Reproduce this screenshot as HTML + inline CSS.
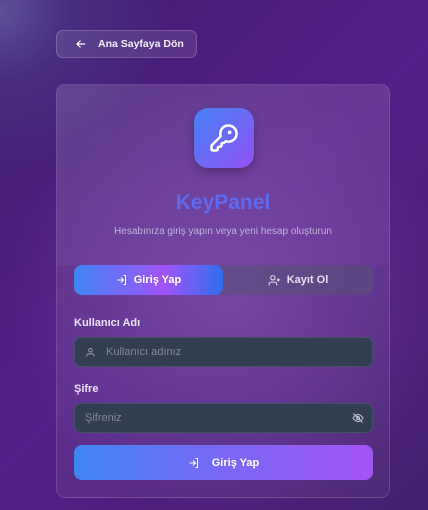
<!DOCTYPE html>
<html><head><meta charset="utf-8"><style>
*{margin:0;padding:0;box-sizing:border-box}
body{width:428px;height:510px;overflow:hidden;font-family:"Liberation Sans",sans-serif;
background:radial-gradient(circle at 0px 10px,#5d4f98 0,#4a2d80 70px,transparent 170px),radial-gradient(circle at 230px 300px,#6a389c 0,transparent 220px),linear-gradient(135deg,#3f1e70 0%,#531f88 50%,#44206e 100%);position:relative}
.back{position:absolute;left:56px;top:30px;width:141px;height:28px;border-radius:7px;background:rgba(255,255,255,0.1);border:1px solid rgba(255,255,255,0.18);color:#f4eefa;font-size:10.5px;font-weight:bold;display:flex;align-items:center;padding-left:19px}
.back span{margin-left:12px}
.card{position:absolute;left:56px;top:84px;width:334px;height:414px;border-radius:9px;border:1px solid rgba(255,255,255,0.13);background:linear-gradient(160deg,rgba(255,255,255,0.1),rgba(255,255,255,0.05));overflow:hidden}
.top{position:absolute;left:0;top:0;width:100%;height:180px;background:linear-gradient(135deg,rgba(120,90,170,0.25),rgba(140,70,180,0.2))}
.icon{position:absolute;left:137px;top:23px;width:60px;height:60px;border-radius:14px;background:linear-gradient(135deg,#4483f5,#8b55f5 90%);box-shadow:0 4px 10px rgba(0,0,0,0.25);display:flex;align-items:center;justify-content:center}
.title{position:absolute;left:0;width:100%;top:106px;text-align:center;font-size:21px;font-weight:bold;color:#5f6af0}
.sub{position:absolute;left:0;width:100%;top:141px;text-align:center;font-size:10px;color:#c2b3da}
.tabs{position:absolute;left:17px;top:180px;width:299px;height:30px;border-radius:8px;background:rgba(90,80,120,0.6)}
.tab{position:absolute;top:0;height:30px;display:flex;align-items:center;justify-content:center;color:#fff;font-size:11px;font-weight:bold;gap:6px}
.t1{left:0;width:149px;border-radius:8px;background:linear-gradient(90deg,#3f86f5,#a153f5 60%,#2f6ff0)}
.t2{left:149px;width:150px;color:#e6e0f0}
.lbl{position:absolute;left:17px;font-size:11px;font-weight:bold;color:#ece4f4}
.inp{position:absolute;left:17px;width:299px;height:30px;border-radius:7px;background:#323f52;border:1px solid #44535f;font-size:11px;color:#7f8a96;display:flex;align-items:center}
.btn{position:absolute;left:17px;top:360px;width:299px;height:35px;border-radius:8px;background:linear-gradient(90deg,#3f86f5,#7a67f5 50%,#a455f5);display:flex;align-items:center;justify-content:center;gap:12px;color:#fff;font-size:11px;font-weight:bold}
</style></head><body>
<div class="back"><svg width="10" height="10" viewBox="0 0 10 10" fill="none" stroke="#fff" stroke-width="1.2"><path d="M9 5H1M4.5 1.5L1 5l3.5 3.5"/></svg><span>Ana Sayfaya Dön</span></div>
<div class="card">
<div class="top"></div>
<div class="icon"><svg width="30" height="30" viewBox="0 0 24 24" fill="none" stroke="#fff" stroke-width="2" stroke-linecap="round" stroke-linejoin="round"><path d="M2.586 17.414A2 2 0 0 0 2 18.828V21a1 1 0 0 0 1 1h3a1 1 0 0 0 1-1v-1a1 1 0 0 1 1-1h1a1 1 0 0 0 1-1v-1a1 1 0 0 1 1-1h.172a2 2 0 0 0 1.414-.586l.814-.814a6.5 6.5 0 1 0-4-4z"/><circle cx="16.5" cy="7.5" r=".5" fill="#fff"/></svg></div>
<div class="title">KeyPanel</div>
<div class="sub">Hesabınıza giriş yapın veya yeni hesap oluşturun</div>
<div class="tabs">
<div class="tab t1"><svg width="12" height="12" viewBox="0 0 24 24" fill="none" stroke="#fff" stroke-width="2"><path d="M15 3h4v18h-4M10 17l5-5-5-5M15 12H3"/></svg>Giriş Yap</div>
<div class="tab t2"><svg width="13" height="13" viewBox="0 0 24 24" fill="none" stroke="#e6e0f0" stroke-width="2"><circle cx="9" cy="7" r="4"/><path d="M2 21v-2a4 4 0 0 1 4-4h6a4 4 0 0 1 4 4v2M19 8v6M16 11h6"/></svg>Kayıt Ol</div>
</div>
<div class="lbl" style="top:232px">Kullanıcı Adı</div>
<div class="inp" style="top:252px;padding-left:10px"><svg width="11" height="11" viewBox="0 0 24 24" fill="none" stroke="#9aa4b0" stroke-width="2"><circle cx="12" cy="7" r="4"/><path d="M4 21v-2a4 4 0 0 1 4-4h8a4 4 0 0 1 4 4v2"/></svg><span style="margin-left:10px">Kullanıcı adınız</span></div>
<div class="lbl" style="top:298px">Şifre</div>
<div class="inp" style="top:318px;padding-left:10px"><span>Şifreniz</span><svg style="position:absolute;right:8px;top:8px" width="12" height="12" viewBox="0 0 24 24" fill="none" stroke="#c0c6ce" stroke-width="2"><path d="M2 12s4-7 10-7 10 7 10 7-4 7-10 7S2 12 2 12z"/><circle cx="12" cy="12" r="3"/><path d="M3 3l18 18"/></svg></div>
<div class="btn"><svg width="12" height="12" viewBox="0 0 24 24" fill="none" stroke="#fff" stroke-width="2"><path d="M15 3h4v18h-4M10 17l5-5-5-5M15 12H3"/></svg>Giriş Yap</div>
</div>
</body></html>
